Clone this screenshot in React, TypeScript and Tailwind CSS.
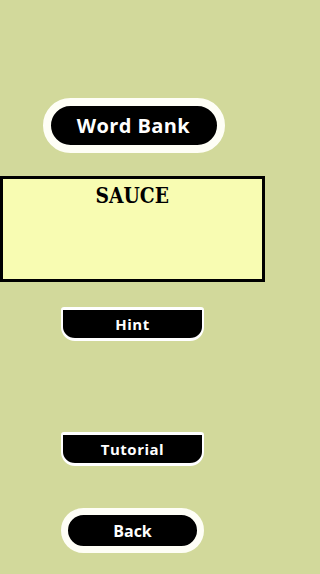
const SANS = "font-['Open_Sans','Lato',sans-serif]"

const TabButton = ({ label }: { label: string }) => (
  <button
    type="button"
    className="flex h-[34px] w-[143px] items-center justify-center rounded-t-[3px] rounded-b-[14px] border-x-2 border-y-[3px] border-white bg-black"
  >
    <span className={`${SANS} text-[15px] leading-none font-bold tracking-[0.5px] text-white`}>
      {label}
    </span>
  </button>
)

export default function App() {
  return (
    <div className="min-h-screen w-full bg-[#d2d99b]">
      <div className="flex h-[574px] w-[265px] flex-col items-center pt-[98px]">
        <button
          type="button"
          className="ml-[2px] flex h-[55px] w-[182px] items-center justify-center rounded-full border-[8px] border-[#fefef6] bg-black"
        >
          <span className={`${SANS} text-[20px] leading-none font-bold tracking-[0.4px] text-white`}>
            Word Bank
          </span>
        </button>

        <div className="mt-[23px] flex h-[106px] w-full justify-center border-[3px] border-black bg-[#f8fcb2] pt-[4px]">
          <span className="inline-block scale-x-[0.85] font-['DejaVu_Serif',serif] text-[22px] leading-[24px] font-bold text-black">
            SAUCE
          </span>
        </div>

        <div className="mt-[25px]">
          <TabButton label="Hint" />
        </div>

        <div className="mt-[91px]">
          <TabButton label="Tutorial" />
        </div>

        <button
          type="button"
          className="mt-[42px] flex h-[45px] w-[143px] items-center justify-center rounded-full border-[7px] border-[#fefef6] bg-black"
        >
          <span className={`${SANS} text-[16px] leading-none font-bold text-white`}>
            Back
          </span>
        </button>
      </div>
    </div>
  )
}
